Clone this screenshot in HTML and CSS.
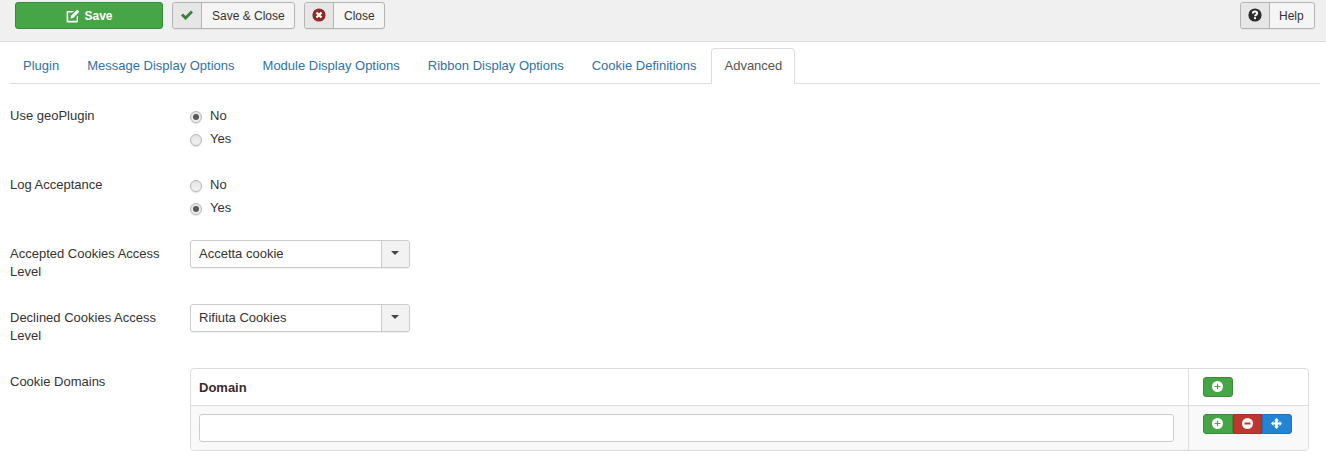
FILE: index.html
```html
<!DOCTYPE html>
<html lang="en">
<head>
<meta charset="utf-8">
<title>Plugin Advanced</title>
<link rel="stylesheet" href="styles.css">
</head>
<body>
<div class="toolbar">
  <button class="btn-save" type="button">
    <svg class="ico-save" viewBox="0 0 14 14"><path fill="#fff" d="M1.5 2H8L6.6 3.4H2.2v8.4h8.4V8l1.4-1.4v5.9a.9.9 0 0 1-.9.9H1.5a.9.9 0 0 1-.9-.9V2.9A.9.9 0 0 1 1.5 2z"/><path fill="#fff" d="M11.3.6l2.1 2.1L7.2 8.9 4.6 9.4l.5-2.6z"/></svg>
    <span>Save</span>
  </button>
  <div class="btn-split w-saveclose">
    <span class="btn-ico"><svg class="ico" viewBox="0 0 14 14"><path fill="#3d7d3a" d="M1 7.4l2-2 2.6 2.6L11 2.6l2 2-7.4 7.4z"/></svg></span>
    <span class="btn-text">Save &amp; Close</span>
  </div>
  <div class="btn-split w-close">
    <span class="btn-ico"><svg class="ico" viewBox="0 0 14 14"><circle cx="7" cy="7" r="6.6" fill="#8f2b26"/><path stroke="#fff" stroke-width="2.2" d="M4.5 4.5l5 5M9.5 4.5l-5 5"/></svg></span>
    <span class="btn-text">Close</span>
  </div>
  <div class="btn-split help">
    <span class="btn-ico"><svg class="ico" viewBox="0 0 14 14"><circle cx="7" cy="7" r="6.6" fill="#2d2d2d"/><path fill="none" stroke="#fff" stroke-width="1.9" d="M4.8 5.4c0-1.3 1-1.9 2.2-1.9s2.2.7 2.2 1.8c0 1.6-2.2 1.5-2.2 3"/><rect x="6" y="9.2" width="2" height="1.9" fill="#fff"/></svg></span>
    <span class="btn-text help-text">Help</span>
  </div>
</div>

<div class="content">
  <ul class="tabs">
    <li class="tab"><a>Plugin</a></li>
    <li class="tab"><a>Message Display Options</a></li>
    <li class="tab"><a>Module Display Options</a></li>
    <li class="tab"><a>Ribbon Display Options</a></li>
    <li class="tab"><a>Cookie Definitions</a></li>
    <li class="tab active"><a>Advanced</a></li>
  </ul>

  <div class="row row-radio">
    <div class="label">Use geoPlugin</div>
    <div class="radios">
      <label class="radio"><span class="dot on"></span>No</label>
      <label class="radio"><span class="dot"></span>Yes</label>
    </div>
  </div>
  <div class="row row-radio">
    <div class="label">Log Acceptance</div>
    <div class="radios">
      <label class="radio"><span class="dot"></span>No</label>
      <label class="radio"><span class="dot on"></span>Yes</label>
    </div>
  </div>
  <div class="row row-select">
    <div class="label">Accepted Cookies Access Level</div>
    <div class="select"><span class="select-val">Accetta cookie</span><span class="select-arrow"><i class="caret"></i></span></div>
  </div>
  <div class="row row-select">
    <div class="label">Declined Cookies Access Level</div>
    <div class="select"><span class="select-val">Rifiuta Cookies</span><span class="select-arrow"><i class="caret"></i></span></div>
  </div>
  <div class="row">
    <div class="label">Cookie Domains</div>
    <div class="table">
      <div class="thead">
        <div class="cell-main th">Domain</div>
        <div class="cell-side"><span class="mini green"><svg class="mini-ico" viewBox="0 0 10 10"><circle cx="5" cy="5" r="5" fill="#fff"/><path stroke="#46a546" stroke-width="1.1" d="M2.4 5h5.2M5 2.4v5.2"/></svg></span></div>
      </div>
      <div class="tbody">
        <div class="cell-main"><div class="input"></div></div>
        <div class="cell-side">
          <span class="mini green"><svg class="mini-ico" viewBox="0 0 10 10"><circle cx="5" cy="5" r="5" fill="#fff"/><path stroke="#46a546" stroke-width="1.1" d="M2.4 5h5.2M5 2.4v5.2"/></svg></span><span class="mini red"><svg class="mini-ico" viewBox="0 0 10 10"><circle cx="5" cy="5" r="5" fill="#fff"/><path stroke="#bd362f" stroke-width="1.6" d="M2.3 5h5.4"/></svg></span><span class="mini blue"><svg class="mini-ico" viewBox="0 0 12 12"><path fill="#fff" d="M6 0l2.6 2.8H7.4v2h2V3.4L12 6 9.4 8.6V7.2h-2v2h1.2L6 12 3.4 9.2h1.2v-2h-2v1.4L0 6l2.6-2.6v1.4h2v-2H3.4z"/></svg></span>
        </div>
      </div>
    </div>
  </div>
</div>
</body>
</html>
```

FILE: styles.css
```css
* { box-sizing: border-box; }
html, body { margin: 0; padding: 0; }
body {
  height: 460px;
  overflow: hidden;
  background: #fff;
  color: #333;
  font: 13px/18px "Liberation Sans", Arial, sans-serif;
}
.toolbar {
  display: flex;
  align-items: flex-start;
  gap: 9px;
  height: 42px;
  padding: 2px 11px 0 15px;
  background: #f0f0f0;
  border-bottom: 1px solid #ddd;
}
.btn-save {
  display: flex;
  align-items: center;
  justify-content: center;
  gap: 4px;
  width: 148px;
  height: 27px;
  padding: 0 0 0 1px;
  border: 1px solid #358a35;
  border-radius: 3px;
  background: #46a546;
  color: #fff;
  font: 700 12px/18px "Liberation Sans", Arial, sans-serif;
}
.ico-save { width: 14px; height: 14px; }
.btn-split {
  display: flex;
  height: 27px;
  border: 1px solid #b3b3b3;
  border-radius: 3px;
  background: #f5f5f5;
  font-size: 12px;
  box-shadow: 0 1px 1px rgba(0, 0, 0, .05);
}
.w-saveclose { width: 123px; }
.w-close { width: 81px; }
.help { width: 75px; margin-left: auto; }
.btn-ico {
  display: flex;
  flex: none;
  align-items: center;
  justify-content: center;
  width: 29px;
  padding-bottom: 2px;
  background: #e6e6e6;
  border-right: 1px solid #b3b3b3;
  border-radius: 3px 0 0 3px;
}
.ico { width: 14px; height: 14px; }
.btn-text { padding: 4px 0 0 10px; white-space: nowrap; }
.help-text { padding-left: 9px; }
.content { padding: 6px 6px 0 10px; }
.tabs {
  display: flex;
  height: 36px;
  margin: 0 0 18px;
  padding: 0;
  list-style: none;
  border-bottom: 1px solid #ddd;
}
.tab {
  height: 36px;
  margin-right: 2px;
  padding: 8px 12px;
  border: 1px solid transparent;
  border-bottom: 0;
  border-radius: 4px 4px 0 0;
  color: #3071a9;
}
.tab.active {
  border-color: #ddd;
  background: #fff;
  color: #555;
}
.row { display: flex; }
.row-radio { height: 69px; }
.row-select { height: 64px; }
.label { width: 180px; padding: 5px 20px 0 0; }
.radios { display: flex; flex-direction: column; padding-top: 2px; }
.radio { display: flex; align-items: center; height: 23px; }
.dot {
  position: relative;
  width: 12px;
  height: 12px;
  margin: 2px 8px 0 0;
  border: 1px solid #b5b5b5;
  border-radius: 50%;
  background: linear-gradient(#e4e4e4, #f2f2f2);
  box-shadow: 0 1px 1px rgba(0, 0, 0, .12);
}
.dot.on::after {
  content: "";
  position: absolute;
  inset: 2px;
  border-radius: 50%;
  background: #595959;
}
.select {
  display: flex;
  width: 220px;
  height: 28px;
  border: 1px solid #ccc;
  border-radius: 3px;
  background: #fff;
  box-shadow: 0 1px 1px rgba(0, 0, 0, .06);
}
.select-val { flex: 1; padding: 4px 8px; }
.select-arrow {
  display: flex;
  align-items: center;
  justify-content: center;
  width: 28px;
  background: #f2f2f2;
  border-left: 1px solid #ccc;
  border-radius: 0 3px 3px 0;
}
.caret {
  width: 0;
  height: 0;
  margin: 0 2px 2px 0;
  border: 4px solid transparent;
  border-top-color: #444;
  border-bottom: 0;
}
.table {
  width: 1119px;
  height: 83px;
  border: 1px solid #ddd;
  border-radius: 4px;
  overflow: hidden;
}
.thead { display: flex; height: 37px; border-bottom: 1px solid #ddd; }
.tbody { display: flex; height: 45px; background: #f9f9f9; }
.cell-main { flex: 1; padding: 8px 14px 8px 8px; }
.th { padding-top: 10px; font-weight: 700; color: #3b2a2a; }
.cell-side {
  display: flex;
  align-items: flex-start;
  width: 120px;
  padding: 8px 14px;
  border-left: 1px solid #ddd;
}
.input {
  height: 28px;
  border: 1px solid #ccc;
  border-radius: 3px;
  background: #fff;
}
.mini {
  display: flex;
  align-items: center;
  justify-content: center;
  width: 30px;
  height: 20px;
  padding: 0 1px 2px 0;
  border: 1px solid transparent;
}
.mini:first-child { border-radius: 3px 0 0 3px; }
.mini:last-child { border-radius: 0 3px 3px 0; }
.mini:only-child { border-radius: 3px; }
.green { background: #46a546; border-color: #3b8a3b; }
.red { width: 29px; background: #bd362f; border-color: #a9302a; }
.blue { background: #2384d3; border-color: #1d71b8; }
.mini-ico { width: 11px; height: 11px; }
```
